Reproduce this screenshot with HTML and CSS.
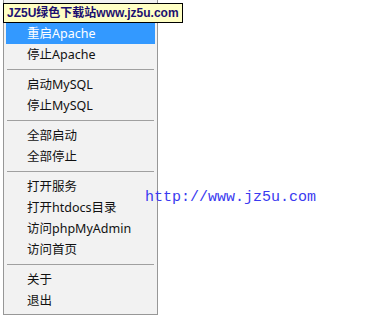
FILE: index.html
```html
<!DOCTYPE html>
<html lang="zh-CN">
<head>
  <meta charset="UTF-8" />
  <meta name="viewport" content="width=device-width,initial-scale=1" />
  <title>XAMPP 托盘菜单</title>
  <link rel="stylesheet" href="styles.css">
</head>
<body>
  <main class="desk">
    <p class="site-url">http://www.jz5u.com</p>
  </main>

  <!-- tray context menu -->
  <ul class="tray-menu">
    <li class="item">启动Apache</li>
    <li class="item active">重启Apache</li>
    <li class="item">停止Apache</li>
    <li class="sep"></li>
    <li class="item">启动MySQL</li>
    <li class="item">停止MySQL</li>
    <li class="sep"></li>
    <li class="item">全部启动</li>
    <li class="item">全部停止</li>
    <li class="sep"></li>
    <li class="item">打开服务</li>
    <li class="item">打开htdocs目录</li>
    <li class="item">访问phpMyAdmin</li>
    <li class="item">访问首页</li>
    <li class="sep"></li>
    <li class="item">关于</li>
    <li class="item">退出</li>
  </ul>

  <div class="watermark">JZ5U绿色下载站www.jz5u.com</div>
</body>
</html>
```

FILE: styles.css
```css
body {
  margin: 0;
  padding: 0;
  background: #ffffff;
  font-family: "Noto Sans", "Noto Sans CJK SC", sans-serif;
  font-size: 12px;
  color: #111111;
}
.desk {
  padding: 189px 0 0 145px;
}
.site-url {
  position: relative;
  z-index: 2;
  margin: 0;
  font-family: "Liberation Mono", monospace;
  font-size: 15px;
  line-height: 18px;
  color: #3a3af0;
}
.tray-menu {
  position: absolute;
  left: 3px;
  top: -2px;
  z-index: 1;
  width: 149px;
  margin: 0;
  padding: 3px 2px;
  list-style: none;
  background: #f2f2f2;
  border: 1px solid #979797;
}
.tray-menu .item {
  height: 21px;
  line-height: 21px;
  padding-left: 21px;
  white-space: nowrap;
  font-size: 12.5px;
}
.tray-menu .item.active {
  background: #3399ff;
  color: #ffffff;
}
.tray-menu .sep {
  height: 9px;
  display: flex;
  align-items: center;
  padding: 0 1px;
}
.tray-menu .sep::before {
  content: "";
  flex: 1;
  height: 1px;
  background: #a0a0a0;
}
.watermark {
  position: absolute;
  left: 3px;
  top: 3px;
  z-index: 3;
  box-sizing: border-box;
  width: 180px;
  height: 20px;
  padding-left: 3px;
  border: 1px solid #000000;
  background: #ffffc4;
  font-family: "Liberation Sans", "Noto Sans CJK SC", sans-serif;
  font-weight: bold;
  font-size: 12px;
  line-height: 18px;
  color: #1c1070;
  white-space: nowrap;
}
```
